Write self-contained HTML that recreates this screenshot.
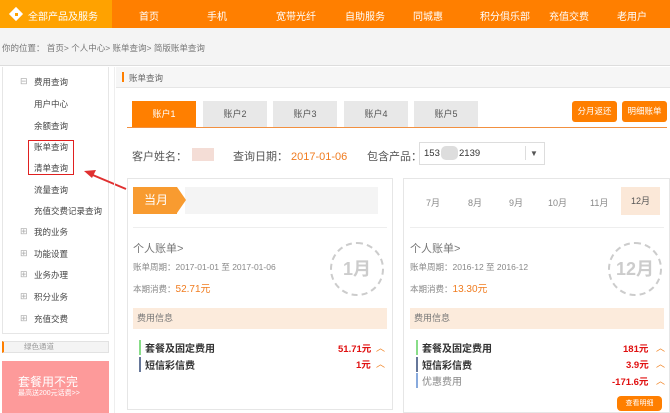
<!DOCTYPE html>
<html><head><meta charset="utf-8"><style>
*{margin:0;padding:0;box-sizing:border-box}
body{width:670px;height:413px;overflow:hidden;background:#fff;font-family:"Liberation Sans","Noto Sans CJK SC",sans-serif;font-size:9px;color:#555;position:relative}
.a{position:absolute;white-space:nowrap}
.nav{color:#fff;font-size:10px;top:8px}
.sb{left:34px;font-size:8.5px;color:#444}
.pl{left:20px;color:#aaa;font-size:9px}
.tab{top:101px;height:26px;background:#e8e8e8;color:#555;text-align:center;line-height:26px;font-size:9px;width:64px}
.btn{background:#ff7f00;color:#fff;border-radius:3px;font-size:8.5px;text-align:center;line-height:21px;height:21px;width:45px;top:101px}
.card{border:1px solid #e6e6e6;background:#fff}
.circ{width:54px;height:54px;border:2px dashed #ccc;border-radius:50%;color:#ccc;font-size:18px;font-weight:bold;text-align:center;line-height:50px}
.band{background:#fcebdc;height:21px;line-height:21px;padding-left:4px;color:#777;font-size:9px}
.row{font-size:10px;color:#333;font-weight:bold;padding-left:4px;border-left:2px solid}
.red{color:#e01010;font-weight:bold;font-size:9.5px}
.car{color:#f08020;font-size:9px}
</style></head><body>
<div class="a" style="left:0;top:0;width:670px;height:28px;background:#ff7f00"></div>
<div class="a" style="left:0;top:0;width:112px;height:28px;background:#ffa200"></div>
<div class="a" style="left:11px;top:9px;width:10px;height:10px;background:#fff;transform:rotate(45deg)"></div>
<div class="a" style="left:15px;top:13px;width:3px;height:3px;background:#ffa200"></div>
<div class="a nav" style="left:28px">全部产品及服务</div>
<div class="a nav" style="left:139px">首页</div>
<div class="a nav" style="left:207px">手机</div>
<div class="a nav" style="left:276px">宽带光纤</div>
<div class="a nav" style="left:345px">自助服务</div>
<div class="a nav" style="left:413px">同城惠</div>
<div class="a nav" style="left:480px">积分俱乐部</div>
<div class="a nav" style="left:549px">充值交费</div>
<div class="a nav" style="left:617px">老用户</div>
<div class="a" style="left:0;top:28px;width:670px;height:38px;background:#f4f4f4;border-bottom:1px solid #ddd"></div>
<div class="a" style="left:2px;top:42px;font-size:8.5px;color:#777">你的位置： 首页&gt; 个人中心&gt; 账单查询&gt; 简版账单查询</div>

<div class="a" style="left:2px;top:67px;width:107px;height:267px;border:1px solid #e6e6e6;border-top:none"></div>
<div class="a pl" style="top:76px">⊟</div><div class="a sb" style="top:76px">费用查询</div>
<div class="a sb" style="top:98px">用户中心</div>
<div class="a sb" style="top:120px">余额查询</div>
<div class="a sb" style="top:141px">账单查询</div>
<div class="a sb" style="top:162px">清单查询</div>
<div class="a sb" style="top:184px">流量查询</div>
<div class="a sb" style="top:205px">充值交费记录查询</div>
<div class="a pl" style="top:226px">⊞</div><div class="a sb" style="top:226px">我的业务</div>
<div class="a pl" style="top:248px">⊞</div><div class="a sb" style="top:248px">功能设置</div>
<div class="a pl" style="top:269px">⊞</div><div class="a sb" style="top:269px">业务办理</div>
<div class="a pl" style="top:291px">⊞</div><div class="a sb" style="top:291px">积分业务</div>
<div class="a pl" style="top:313px">⊞</div><div class="a sb" style="top:313px">充值交费</div>
<div class="a" style="left:28px;top:140px;width:46px;height:35px;border:1.5px solid #e02020"></div>
<svg class="a" style="left:80px;top:165px" width="50" height="28"><line x1="46" y1="24" x2="8" y2="8" stroke="#e03030" stroke-width="2"/><polygon points="4,6 16,5 12,13" fill="#e03030"/></svg>
<div class="a" style="left:2px;top:341px;width:107px;height:12px;background:#f4f4f4;border:1px solid #e2e2e2;border-left:2px solid #ff7f00;font-size:7.5px;color:#999;padding-left:20px;line-height:10px">绿色通道</div>
<div class="a" style="left:2px;top:361px;width:107px;height:52px;background:#fd9a9a"></div>
<div class="a" style="left:18px;top:373px;color:#fff;font-size:12px">套餐用不完</div>
<div class="a" style="left:18px;top:388px;color:#fff;font-size:7px">最高送200元话费&gt;&gt;</div>
<div class="a" style="left:114px;top:67px;width:1px;height:346px;background:#eee"></div>

<div class="a" style="left:116px;top:67px;width:554px;height:21px;background:#f6f6f6;border-bottom:1px solid #e6e6e6"></div>
<div class="a" style="left:122px;top:72px;width:2px;height:10px;background:#ff7f00"></div>
<div class="a" style="left:129px;top:72px;font-size:8.5px;color:#666">账单查询</div>
<div class="a tab" style="left:132px;background:#ff7f00;color:#fff">账户1</div>
<div class="a tab" style="left:203px">账户2</div>
<div class="a tab" style="left:273px">账户3</div>
<div class="a tab" style="left:344px">账户4</div>
<div class="a tab" style="left:414px">账户5</div>
<div class="a" style="left:127px;top:127px;width:540px;height:1px;background:#f29040"></div>
<div class="a btn" style="left:572px">分月返还</div>
<div class="a btn" style="left:622px">明细账单</div>
<div class="a" style="left:132px;top:148px;font-size:11px;color:#555">客户姓名：</div>
<div class="a" style="left:192px;top:148px;width:22px;height:13px;background:#f4ddd6"></div>
<div class="a" style="left:233px;top:148px;font-size:11px;color:#555">查询日期：</div>
<div class="a" style="left:291px;top:151px;font-size:11px;color:#f07c20">2017-01-06</div>
<div class="a" style="left:367px;top:148px;font-size:11px;color:#555">包含产品：</div>
<div class="a" style="left:419px;top:142px;width:126px;height:23px;border:1px solid #ddd"></div>
<div class="a" style="left:424px;top:148px;font-size:9.5px;color:#333">153</div>
<div class="a" style="left:441px;top:146px;width:17px;height:14px;background:#ddd;border-radius:5px"></div>
<div class="a" style="left:459px;top:148px;font-size:9.5px;color:#333">2139</div>
<div class="a" style="left:525px;top:146px;width:1px;height:14px;background:#ddd"></div>
<div class="a" style="left:530px;top:149px;font-size:8px;color:#555">▼</div>

<div class="a card" style="left:127px;top:178px;width:266px;height:232px"></div>
<div class="a" style="left:185px;top:187px;width:193px;height:27px;background:#f4f4f4"></div>
<div class="a" style="left:133px;top:187px;width:44px;height:27px;background:#f89b30;color:#fff;font-size:12px;line-height:27px;padding-left:11px">当月</div>
<div class="a" style="left:177px;top:187px;width:0;height:0;border-top:13.5px solid transparent;border-bottom:13.5px solid transparent;border-left:9px solid #f89b30"></div>
<div class="a" style="left:133px;top:227px;width:254px;height:1px;background:#eee"></div>
<div class="a" style="left:133px;top:240px;font-size:11px;color:#777">个人账单&gt;</div>
<div class="a" style="left:133px;top:261px;font-size:8.5px;color:#888">账单周期：2017-01-01 至 2017-01-06</div>
<div class="a" style="left:133px;top:280px;font-size:8.5px;color:#888">本期消费：<span style="color:#f07c20;font-size:10px">52.71元</span></div>
<div class="a circ" style="left:330px;top:242px">1月</div>
<div class="a band" style="left:133px;top:308px;width:254px">费用信息</div>
<div class="a row" style="left:139px;top:340px;border-color:#8d8">套餐及固定费用</div>
<div class="a row" style="left:139px;top:357px;border-color:#679">短信彩信费</div>
<div class="a red" style="left:338px;top:341px">51.71元</div><div class="a car" style="left:376px;top:341px">︿</div>
<div class="a red" style="left:356px;top:357px">1元</div><div class="a car" style="left:376px;top:357px">︿</div>

<div class="a card" style="left:403px;top:178px;width:267px;height:235px"></div>
<div class="a" style="left:426px;top:196px;color:#888;font-size:9px">7月</div>
<div class="a" style="left:468px;top:196px;color:#888;font-size:9px">8月</div>
<div class="a" style="left:509px;top:196px;color:#888;font-size:9px">9月</div>
<div class="a" style="left:548px;top:196px;color:#888;font-size:9px">10月</div>
<div class="a" style="left:590px;top:196px;color:#888;font-size:9px">11月</div>
<div class="a" style="left:621px;top:187px;width:39px;height:28px;background:#fbe8d8;text-align:center;line-height:28px;color:#555;font-size:9px">12月</div>
<div class="a" style="left:410px;top:227px;width:254px;height:1px;background:#eee"></div>
<div class="a" style="left:410px;top:240px;font-size:11px;color:#777">个人账单&gt;</div>
<div class="a" style="left:410px;top:261px;font-size:8.5px;color:#888">账单周期：2016-12 至 2016-12</div>
<div class="a" style="left:410px;top:280px;font-size:8.5px;color:#888">本期消费：<span style="color:#f07c20;font-size:10px">13.30元</span></div>
<div class="a circ" style="left:608px;top:242px">12月</div>
<div class="a band" style="left:410px;top:308px;width:254px">费用信息</div>
<div class="a row" style="left:416px;top:340px;border-color:#8d8">套餐及固定费用</div>
<div class="a row" style="left:416px;top:357px;border-color:#679">短信彩信费</div>
<div class="a row" style="left:416px;top:373px;border-color:#8ad;font-weight:normal;color:#888">优惠费用</div>
<div class="a red" style="left:623px;top:341px">181元</div><div class="a car" style="left:656px;top:341px">︿</div>
<div class="a red" style="left:626px;top:357px">3.9元</div><div class="a car" style="left:656px;top:357px">︿</div>
<div class="a red" style="left:612px;top:374px">-171.6元</div><div class="a car" style="left:656px;top:374px">︿</div>
<div class="a" style="left:617px;top:396px;width:45px;height:15px;background:#ff7f00;border-radius:4px;color:#fff;font-size:7px;text-align:center;line-height:15px">查看明细</div>
</body></html>
